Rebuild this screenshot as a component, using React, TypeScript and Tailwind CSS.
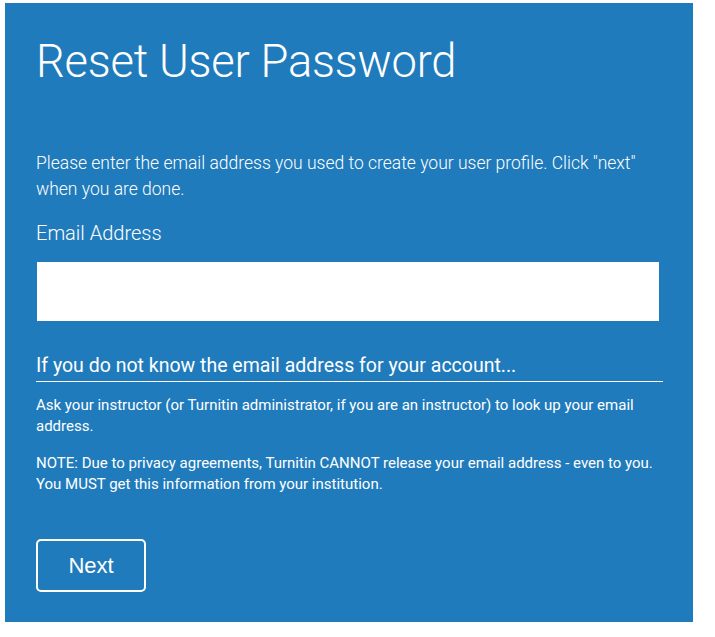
import React from 'react';

const App = () => {
  return (
    <div className="min-h-[637px] w-full bg-white pt-[3px] pl-[5px]" style={{ fontFamily: 'Roboto, "Liberation Sans", sans-serif' }}>
      <div className="w-[688px] h-[619px] bg-[#1f7bbb] px-[31px] pt-[31px] text-white">
        {/* Title */}
        <h1 className="text-[45.3px] font-light leading-[56px] tracking-[-0.2px]">Reset User Password</h1>

        {/* Intro */}
        <p className="mt-[60px] text-[17.5px] font-light leading-[26px] pr-[20px]">
          Please enter the email address you used to create your user profile. Click "next" when you are done.
        </p>

        {/* Email field */}
        <label className="block mt-[17px] text-[20px] font-light leading-[28px]">Email Address</label>
        <input
          type="text"
          className="block mt-[15px] ml-[1px] w-[622px] h-[59px] bg-white text-gray-900 px-3 outline-none"
        />

        {/* Help section */}
        <h2 className="mt-[31px] text-[19.5px] leading-[28px] pb-[1px] border-b border-white w-[627px]">
          If you do not know the email address for your account...
        </h2>
        <p className="mt-[13px] text-[15px] leading-[21px]">
          Ask your instructor (or Turnitin administrator, if you are an instructor) to look up your email address.
        </p>
        <p className="mt-[16px] text-[15px] leading-[21px]">
          NOTE: Due to privacy agreements, Turnitin CANNOT release your email address - even to you. You MUST get this information from your institution.
        </p>

        {/* Next button */}
        <button className="mt-[44px] w-[110px] h-[53px] rounded-[5px] border-2 border-white text-[22px] text-white" style={{ fontFamily: '"Liberation Sans", Arial, sans-serif' }}>
          Next
        </button>
      </div>
    </div>
  );
};

export default App;
